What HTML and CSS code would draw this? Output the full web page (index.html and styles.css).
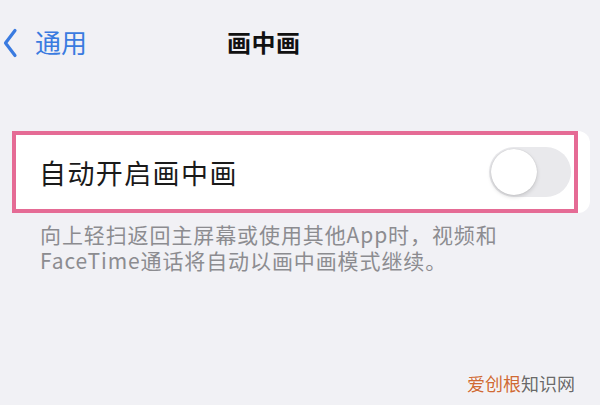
FILE: index.html
```html
<!DOCTYPE html>
<html lang="zh-CN">
<head>
    <meta charset="UTF-8">
    <meta name="viewport" content="width=device-width, initial-scale=1.0">
    <title>画中画</title>
    <link rel="stylesheet" href="styles.css">
</head>
<body>
    <!-- Navigation bar -->
    <nav class="navbar">
        <a href="#" class="back">
            <svg class="chevron" width="16" height="30" viewBox="0 0 16 30">
                <path d="M13 2.5 L3.5 15 L13 27.5" fill="none" stroke="#3a7be0" stroke-width="3.2" stroke-linecap="round" stroke-linejoin="round"/>
            </svg>
            <span>通用</span>
        </a>
        <h1 class="title">画中画</h1>
    </nav>

    <!-- Settings group -->
    <div class="cell">
        <div class="highlight">
            <span class="label">自动开启画中画</span>
            <div class="toggle">
                <div class="knob"></div>
            </div>
        </div>
    </div>

    <p class="footnote">向上轻扫返回主屏幕或使用其他App时，视频和<br>FaceTime通话将自动以画中画模式继续。</p>

    <div class="watermark"><span class="brand">爱创根</span>知识网</div>
</body>
</html>
```

FILE: styles.css
```css
body {
    margin: 0;
    padding: 0;
    background-color: #f1f1f5;
    font-family: "Noto Sans CJK SC", "Noto Sans", sans-serif;
    width: 600px;
    height: 405px;
    overflow: hidden;
    position: relative;
}

.navbar {
    display: flex;
    align-items: center;
    height: 82px;
    padding: 0 0 4px 2px;
}

.back {
    display: flex;
    align-items: center;
    gap: 17px;
    color: #3a7be0;
    text-decoration: none;
    font-size: 26px;
}

.chevron {
    margin-top: 4px;
}

.title {
    margin: 0 0 0 140px;
    font-size: 24px;
    font-weight: 700;
    color: #111;
    letter-spacing: 0.5px;
}

.cell {
    margin: 45px 0 0 12px;
    width: 578px;
    height: 82px;
    background: #fff;
    border-radius: 0 12px 12px 0;
}

.highlight {
    box-sizing: border-box;
    width: 566px;
    height: 82px;
    border: 4px solid #e56b95;
    display: flex;
    align-items: center;
    justify-content: space-between;
    padding: 0 3px 0 23px;
}

.label {
    font-size: 27px;
    color: #1a1a1a;
    letter-spacing: 1.4px;
}

.toggle {
    width: 82px;
    height: 50px;
    border-radius: 25px;
    background: #e9e9ec;
    display: flex;
    align-items: center;
    padding-left: 2px;
    box-sizing: border-box;
}

.knob {
    width: 46px;
    height: 46px;
    border-radius: 50%;
    background: #fff;
    box-shadow: 0 2px 4px rgba(0, 0, 0, 0.15), 0 0 1px rgba(0, 0, 0, 0.2);
}

.footnote {
    margin: 8px 0 0 40px;
    font-size: 21px;
    line-height: 26px;
    color: #8c8c90;
    letter-spacing: 0.9px;
}

.watermark {
    position: absolute;
    right: 25px;
    bottom: 9px;
    font-size: 18px;
    color: #6a6a6a;
    text-shadow: 0 0 2px #fff;
}

.brand {
    color: #cf6a35;
}
```
